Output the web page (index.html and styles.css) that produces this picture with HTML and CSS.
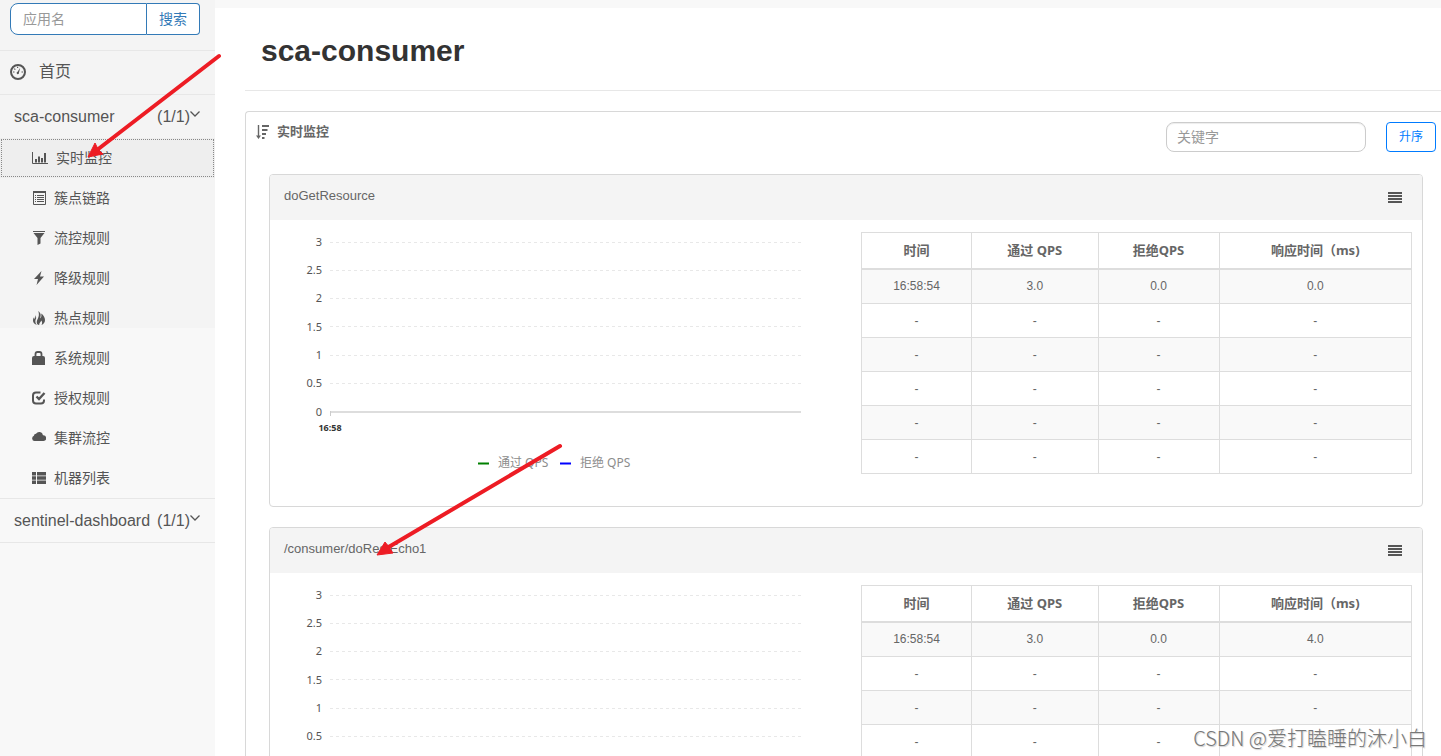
FILE: index.html
```html
<!DOCTYPE html>
<html lang="zh-CN">
<head>
<meta charset="utf-8">
<title>Sentinel Dashboard</title>
<link rel="stylesheet" href="styles.css">
</head>
<body>
<div class="app">
  <aside class="sidebar">
    <form class="search">
      <input class="search-input" type="text" placeholder="应用名" aria-label="应用名">
      <button class="search-button" type="button">搜索</button>
    </form>
    <nav class="menu">
      <a class="menu-head home" href="#">
        <svg class="icon-lg" viewBox="0 0 16 16"><circle cx="8" cy="8" r="7" fill="none" stroke="currentColor" stroke-width="2"/><path d="M10.200 3.800 7.600 7.800a1.200 1.200 0 1 0 1.400.8z" fill="currentColor"/><path d="M3 8h1.500M11.500 8H13M4.300 4.600l1 1M7.600 2.800v1.300" stroke="currentColor" stroke-width="1.200"/></svg>
        <span>首页</span>
      </a>
      <a class="menu-head group" href="#"><span>sca-consumer</span><span class="count">(1/1)</span>
        <svg class="chevron" viewBox="0 0 10 10"><path d="M.5 2.500 5 7l4.500-4.500" fill="none" stroke="currentColor" stroke-width="1.300"/></svg></a>
      <ul class="submenu">
        <li><a class="item active" href="#"><svg class="icon-wide" viewBox="0 0 16 14"><path d="M.5 1v11.500H16" fill="none" stroke="currentColor"/><path d="M3 8h2v3.500H3zM6 5.500h2v6H6zM9 7h2v4.500H9zM12 2h2v9.500h-2z" fill="currentColor"/></svg><span>实时监控</span></a></li>
        <li><a class="item" href="#"><svg class="icon" viewBox="0 0 14 14"><path d="M1.500.5h12v13h-12z" fill="none" stroke="currentColor"/><path d="M1 0h13v2H1zM3 4h1v1H3zM3 6h1v1H3zM3 8h1v1H3zM3 10h1v1H3zM5 4h7v1H5zM5 6h7v1H5zM5 8h7v1H5zM5 10h7v1H5z" fill="currentColor"/></svg><span>簇点链路</span></a></li>
        <li><a class="item" href="#"><svg class="icon" viewBox="0 0 14 14"><path d="M1 0h12v1H1zM1.500 2h11L8.500 7v5.500L5.500 14V7z" fill="currentColor"/></svg><span>流控规则</span></a></li>
        <li><a class="item" href="#"><svg class="icon" viewBox="0 0 14 14"><path d="M9.500 0 2 8h4l-1.500 6L12 5.500H8z" fill="currentColor"/></svg><span>降级规则</span></a></li>
        <li><a class="item" href="#"><svg class="icon" viewBox="0 0 14 14"><path d="M6.300 0C9.500 2.500 8.800 5 8 7.500c1.500-1 1.600-3 1.200-5C11.500 4 13 6.500 13 9c0 2.500-1.300 4-3.500 5 1-2 .7-3.200-.2-4.500C8.500 11.500 7 12 7.200 14 4 13.500 4.500 10 5.700 8 7 5.500 7.300 3 6.300 0zM3 4c1.300 1.500 1.500 3 .7 4.500C3 10 3.300 12.500 5 13.800 2.500 13.500 1 11.500 1 9.500 1 8 1.500 7 2.200 6c-.1 1 0 1.500.4 2C3.400 6.500 3.500 5.500 3 4z" fill="currentColor"/></svg><span>热点规则</span></a></li>
        <li><a class="item" href="#"><svg class="icon" viewBox="0 0 14 14"><path d="M0 7q0-2 2-2h9q2 0 2 2v7H0z" fill="currentColor"/><path d="M3.500 6V3q0-2 2-2h2q2 0 2 2v3" fill="none" stroke="currentColor" stroke-width="1.800"/></svg><span>系统规则</span></a></li>
        <li><a class="item" href="#"><svg class="icon" viewBox="0 0 14 14"><path d="M8.500 1.500H4Q1 1.500 1 4.500v5q0 3 3 3h5q3 0 3-3V8.500" fill="none" stroke="currentColor" stroke-width="2"/><path d="M4.500 5.500 7 8l5.500-6" fill="none" stroke="currentColor" stroke-width="2.400"/></svg><span>授权规则</span></a></li>
        <li><a class="item" href="#"><svg class="icon" viewBox="0 0 14 14"><path d="M2.500 10a2.700 2.700 0 0 1-.6-5.200A2.200 2.200 0 0 1 4 2.800 3.800 3.800 0 0 1 11 4.200 2.900 2.900 0 0 1 11.500 10z" fill="currentColor"/></svg><span>集群流控</span></a></li>
        <li><a class="item" href="#"><svg class="icon" viewBox="0 0 14 14"><path d="M0 1h4v3.500H0zM0 5.300h4v3.500H0zM0 9.600h4V13H0zM5 1h9v3.500H5zM5 5.300h9v3.500H5zM5 9.600h9V13H5z" fill="currentColor"/></svg><span>机器列表</span></a></li>
      </ul>
      <a class="menu-head group last" href="#"><span>sentinel-dashboard</span><span class="count">(1/1)</span>
        <svg class="chevron" viewBox="0 0 10 10"><path d="M.5 2.500 5 7l4.500-4.500" fill="none" stroke="currentColor" stroke-width="1.300"/></svg></a>
    </nav>
  </aside>

  <main class="main">
    <header class="page-head"><h1>sca-consumer</h1></header>
    <section class="panel">
      <div class="toolbar">
        <h2><svg class="icon-sort" viewBox="0 0 14 14"><path d="M2.500 0v12" fill="none" stroke="currentColor" stroke-width="1.400"/><path d="M0 10.500h5L2.500 14zM6 0h7v2H6zM6 4h5.500v2H6zM6 8h4v2H6zM6 12h2.500v2H6z" fill="currentColor"/></svg><span>实时监控</span></h2>
        <input class="keyword" type="text" placeholder="关键字" aria-label="关键字">
        <button class="sort" type="button">升序</button>
      </div>

      <div class="cards">
        <article class="card">
          <header class="card-head"><span>doGetResource</span>
            <button class="list-button" type="button" aria-label="列表"><svg viewBox="0 0 14 12"><path d="M0 0h14v2H0zM0 3h14v2H0zM0 6h14v2H0zM0 9h14v2H0z" fill="currentColor"/></svg></button>
          </header>
          <div class="card-body">
            <svg class="chart" viewBox="0 0 591 286" role="img" aria-label="QPS">
              <g class="grid"><path d="M60 22.500h471M60 50.500h471M60 78.500h471M60 106.500h471M60 135.500h471M60 163.500h471"/></g>
              <path class="axis" d="M60 192h471"/><path class="tick" d="M60.500 191v5"/>
              <g class="y-labels"><text x="52" y="26">3</text><text x="52" y="54">2.5</text><text x="52" y="82">2</text><text x="52" y="111">1.5</text><text x="52" y="139">1</text><text x="52" y="167">0.5</text><text x="52" y="196">0</text></g>
              <text class="x-label" x="60" y="211">16:58</text>
              <path class="pass" d="M208 243.500h11"/><text class="legend" x="228" y="247">通过 QPS</text>
              <path class="block" d="M290 243.500h11"/><text class="legend" x="310" y="247">拒绝 QPS</text>
            </svg>
            <div class="table-wrap"><table>
              <thead><tr><th class="c-time">时间</th><th class="c-pass">通过 QPS</th><th class="c-block">拒绝QPS</th><th>响应时间（ms)</th></tr></thead>
              <tbody>
                <tr><td>16:58:54</td><td>3.0</td><td>0.0</td><td>0.0</td></tr>
                <tr><td>-</td><td>-</td><td>-</td><td>-</td></tr>
                <tr><td>-</td><td>-</td><td>-</td><td>-</td></tr>
                <tr><td>-</td><td>-</td><td>-</td><td>-</td></tr>
                <tr><td>-</td><td>-</td><td>-</td><td>-</td></tr>
                <tr><td>-</td><td>-</td><td>-</td><td>-</td></tr>
              </tbody>
            </table></div>
          </div>
        </article>

        <article class="card">
          <header class="card-head"><span>/consumer/doRestEcho1</span>
            <button class="list-button" type="button" aria-label="列表"><svg viewBox="0 0 14 12"><path d="M0 0h14v2H0zM0 3h14v2H0zM0 6h14v2H0zM0 9h14v2H0z" fill="currentColor"/></svg></button>
          </header>
          <div class="card-body">
            <svg class="chart" viewBox="0 0 591 286" role="img" aria-label="QPS">
              <g class="grid"><path d="M60 22.500h471M60 50.500h471M60 78.500h471M60 106.500h471M60 135.500h471M60 163.500h471"/></g>
              <path class="axis" d="M60 192h471"/><path class="tick" d="M60.500 191v5"/>
              <g class="y-labels"><text x="52" y="26">3</text><text x="52" y="54">2.5</text><text x="52" y="82">2</text><text x="52" y="111">1.5</text><text x="52" y="139">1</text><text x="52" y="167">0.5</text><text x="52" y="196">0</text></g>
              <text class="x-label" x="60" y="211">16:58</text>
              <path class="pass" d="M208 243.500h11"/><text class="legend" x="228" y="247">通过 QPS</text>
              <path class="block" d="M290 243.500h11"/><text class="legend" x="310" y="247">拒绝 QPS</text>
            </svg>
            <div class="table-wrap"><table>
              <thead><tr><th class="c-time">时间</th><th class="c-pass">通过 QPS</th><th class="c-block">拒绝QPS</th><th>响应时间（ms)</th></tr></thead>
              <tbody>
                <tr><td>16:58:54</td><td>3.0</td><td>0.0</td><td>4.0</td></tr>
                <tr><td>-</td><td>-</td><td>-</td><td>-</td></tr>
                <tr><td>-</td><td>-</td><td>-</td><td>-</td></tr>
                <tr><td>-</td><td>-</td><td>-</td><td>-</td></tr>
                <tr><td>-</td><td>-</td><td>-</td><td>-</td></tr>
                <tr><td>-</td><td>-</td><td>-</td><td>-</td></tr>
              </tbody>
            </table></div>
          </div>
        </article>
      </div>
    </section>
  </main>
</div>

<svg class="arrows" aria-hidden="true">
  <path class="shaft" d="M219 56 97 150M560 446 387 548"/>
  <path class="tip" d="M88 157 95 143 98 149 103 154zM377 555 385 542 389 547 393 553z"/>
</svg>
<div class="watermark">CSDN @爱打瞌睡的沐小白</div>
</body>
</html>
```
FILE: styles.css
```css
* { box-sizing: border-box; }

body {
  margin: 0;
  height: 100vh;
  overflow: hidden;
  position: relative;
  background: #f8f8f8;
  color: #555;
  font: 14px/20px "Liberation Sans", "Noto Sans CJK SC", sans-serif;
}

a { color: inherit; text-decoration: none; }
button, input { font: inherit; margin: 0; }
svg { flex: none; }

.app { display: flex; height: 100%; overflow: hidden; }

/* Sidebar */
.sidebar {
  flex: 0 0 215px;
  min-width: 0;
  padding-top: 3px;
  background: linear-gradient(#f4f4f4 328px, #f8f8f8 328px);
}

.search { display: flex; height: 32px; margin: 0 15px 15px 10px; }

.search-input {
  flex: 1;
  width: 100%;
  min-width: 0;
  padding: 0 12px;
  border: 1px solid #337ab7;
  border-radius: 8px 0 0 8px;
  background: #fff;
}

.search-input::placeholder, .keyword::placeholder { color: #999; opacity: 1; }

.search-button {
  flex: 0 0 53px;
  padding: 0;
  border: 1px solid #337ab7;
  border-left: 0;
  border-radius: 0 4px 4px 0;
  background: #fff;
  color: #337ab7;
}

.menu-head {
  display: flex;
  align-items: center;
  height: 44px;
  border-top: 1px solid #e7e7e7;
  font-size: 16px;
}

.home { padding: 0 0 2px 10px; gap: 13px; }
.group { padding: 0 15px 0 14px; }
.count { margin-left: auto; }
.last { height: 45px; border-bottom: 1px solid #e7e7e7; }

.icon-lg { width: 16px; height: 16px; }
.chevron { width: 10px; height: 10px; margin-bottom: 6px; }

.submenu { margin: 0; padding: 0; list-style: none; }

.item {
  display: flex;
  align-items: center;
  gap: 8px;
  height: 40px;
  padding-left: 32px;
}

.active {
  background: #eee;
  outline: 1px dotted #888;
  outline-offset: -2px;
}

.icon { width: 14px; height: 14px; }
.icon-wide { width: 16px; height: 14px; }

/* Content */
.main { flex: 1; min-width: 0; margin-top: 8px; padding-left: 30px; background: #fff; }

.page-head { padding: 26px 16px 23px; border-bottom: 1px solid #e7e7e7; }
.page-head h1 { margin: 0; color: #333; font-size: 30px; line-height: 33px; }

.panel {
  margin-top: 20px;
  border: 1px solid #d8d8d8;
  border-right: 0;
  border-radius: 4px 0 0 0;
  color: #666;
}

.toolbar { display: flex; gap: 20px; height: 62px; padding: 10px 5px 0 10px; }

.toolbar h2 {
  display: flex;
  gap: 7px;
  align-items: center;
  height: 20px;
  margin: 0 auto 0 0;
  font-size: 13px;
}

.icon-sort { width: 14px; height: 14px; }

.keyword {
  width: 200px;
  height: 30px;
  padding: 0 10px;
  border: 1px solid #ccc;
  border-radius: 8px;
  box-shadow: inset 0 1px 1px rgba(0, 0, 0, .075);
}

.sort {
  width: 50px;
  height: 30px;
  padding: 0;
  border: 1px solid #007bff;
  border-radius: 4px;
  background: #fff;
  color: #007bff;
  font-size: 12px;
}

.cards { display: grid; gap: 20px; padding: 0 18px 20px 23px; }

.card { border: 1px solid #d8d8d8; border-radius: 4px; overflow: hidden; }

.card-head {
  display: flex;
  justify-content: space-between;
  height: 45px;
  padding: 11px 20px 0 14px;
  background: #f4f4f4;
  font-size: 13px;
}

.list-button {
  display: flex;
  width: 14px;
  height: 24px;
  padding: 0;
  align-items: center;
  border: 0;
  background: none;
  color: #555;
}
.list-button svg { width: 14px; height: 12px; }

.card-body { display: grid; grid-template-columns: 591fr 561fr; }

.table-wrap { padding: 12px 10px 0 0; }

table {
  width: 100%;
  border-collapse: collapse;
  table-layout: fixed;
  font-size: 12px;
  text-align: center;
}

th, td { height: 34px; padding: 0; border: 1px solid #ddd; }
th { height: 36px; border-bottom-width: 2px; font-family: "Noto Sans", "Noto Sans CJK SC", sans-serif; font-size: 13px; }
tbody tr:first-child td { height: 35px; }
tbody tr:nth-child(odd) { background: #f9f9f9; }
.c-time { width: 20%; }
.c-pass { width: 23%; }
.c-block { width: 22%; }

/* Chart */
.chart { display: block; width: 100%; font-family: "Noto Sans", "Noto Sans CJK SC", sans-serif; }
.grid path { stroke: #e8e8e8; stroke-dasharray: 3 3; fill: none; }
.axis { stroke: #ddd; stroke-width: 2; }
.tick { stroke: #ccc; }
.y-labels { fill: #555; font-size: 11px; text-anchor: end; }
.x-label { fill: #333; font-size: 9px; font-weight: bold; text-anchor: middle; }
.legend { fill: #8c8c8c; font-size: 12px; }
.pass { stroke: green; stroke-width: 2; }
.block { stroke: blue; stroke-width: 2; }

/* Annotations over the page */
.arrows { position: absolute; inset: 0; width: 100%; height: 100%; pointer-events: none; }
.shaft { fill: none; stroke: #ed1c24; stroke-width: 4; stroke-linecap: round; }
.tip { fill: #ed1c24; stroke: #ed1c24; }

.watermark {
  position: absolute;
  right: 14px;
  bottom: 4px;
  color: #777;
  text-shadow: 1px 1px 1px #ccc;
  font: 300 20px/28px "Noto Sans CJK SC", sans-serif;
}
```
